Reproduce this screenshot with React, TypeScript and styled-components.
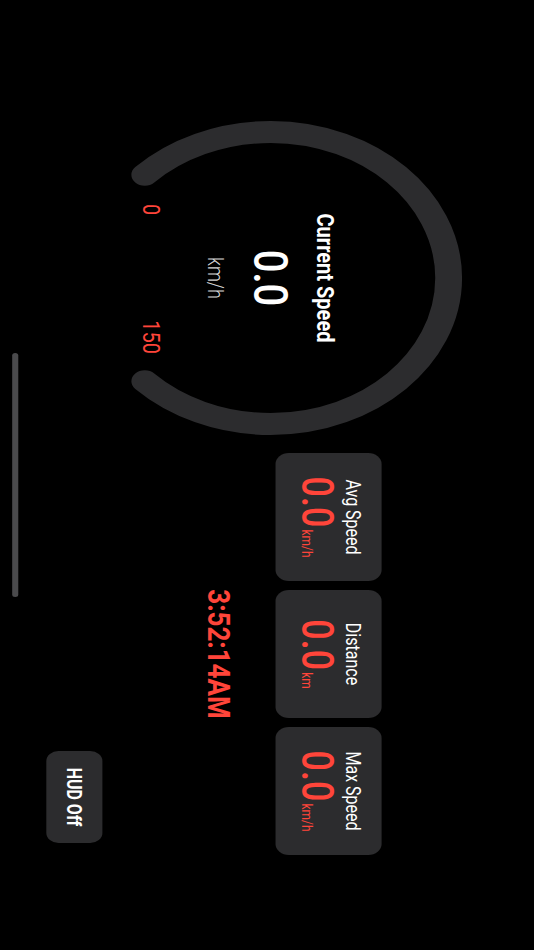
import React from "react";
import styled, { createGlobalStyle } from "styled-components";

const GlobalStyle = createGlobalStyle`
  html, body {
    margin: 0;
    padding: 0;
    background: #000;
    overflow: hidden;
  }
  * { box-sizing: border-box; }
`;

const RED = "#ff453a";
const PANEL = "#2c2c2e";
const FONT = `Roboto, "Liberation Sans", sans-serif`;

const Frame = styled.div`
  width: 534px;
  height: 950px;
  overflow: hidden;
  background: #000;
  font-family: ${FONT};
`;

/* The app is shown in landscape, rotated into the portrait frame */
const Landscape = styled.div`
  position: relative;
  width: 950px;
  height: 438px;
  transform-origin: 0 0;
  transform: translateX(534px) rotate(90deg) scaleY(1.2192);
  display: flex;
  align-items: flex-start;
  padding-left: 121px;
  background: #000;
`;

const Gauge = styled.div`
  position: relative;
  width: 314px;
  height: 314px;
  margin-top: 59px;
  flex-shrink: 0;
`;

const GaugeSvg = styled.svg`
  display: block;
  width: 314px;
  height: 314px;
`;

const GaugeOverlay = styled.div`
  position: absolute;
  inset: 0;
  display: flex;
  flex-direction: column;
  align-items: center;
  padding-top: 100px;
`;

const GaugeTitle = styled.div`
  font-size: 20px;
  line-height: 24px;
  font-weight: 700;
  color: #fff;
`;

const GaugeValue = styled.div`
  margin-top: 10px;
  font-size: 40px;
  line-height: 48px;
  font-weight: 500;
  color: #fff;
`;

const GaugeUnit = styled.div`
  margin-top: 9px;
  font-size: 18px;
  line-height: 22px;
  font-weight: 300;
  color: rgba(255, 255, 255, 0.85);
`;

const ScaleRow = styled.div`
  align-self: stretch;
  margin-top: 30px;
  display: flex;
  justify-content: space-between;
  padding: 0 81px 0 83px;
`;

const ScaleLabel = styled.span`
  font-size: 20px;
  line-height: 24px;
  font-weight: 400;
  color: ${RED};
`;

const Stats = styled.div`
  margin-left: 18px;
  margin-top: 125px;
  display: flex;
  flex-direction: column;
  align-items: center;
  width: 402px;
`;

const CardRow = styled.div`
  display: flex;
  gap: 9px;
`;

const Card = styled.div`
  width: 128px;
  height: 87px;
  background: ${PANEL};
  border-radius: 11px;
  display: flex;
  flex-direction: column;
  align-items: center;
  padding-top: 14px;
`;

const CardLabel = styled.div`
  font-size: 16px;
  line-height: 20px;
  color: #fff;
`;

const CardValueRow = styled.div`
  display: flex;
  align-items: baseline;
  margin-top: -1px;
`;

const CardValue = styled.span`
  font-size: 36px;
  line-height: 40px;
  font-weight: 500;
  color: ${RED};
`;

const CardUnit = styled.span`
  margin-left: 2px;
  font-size: 12px;
  line-height: 14px;
  color: ${RED};
`;

const Clock = styled.div`
  margin-top: 31px;
  font-size: 26px;
  line-height: 30px;
  font-weight: 700;
  color: ${RED};
`;

const ButtonRow = styled.div`
  align-self: stretch;
  display: flex;
  justify-content: flex-end;
  padding-right: 12px;
  margin-top: 81px;
`;

const HudButton = styled.button`
  width: 92px;
  height: 46px;
  border: none;
  border-radius: 10px;
  background: ${PANEL};
  color: #fff;
  font-family: ${FONT};
  font-size: 16px;
  font-weight: 700;
  padding: 0;
  cursor: pointer;
`;

const HomeIndicator = styled.div`
  position: absolute;
  left: 50%;
  bottom: 10px;
  width: 244px;
  height: 5px;
  margin-left: -122px;
  border-radius: 3px;
  background: #4a4a4c;
`;

const stats = [
  { label: "Avg Speed", value: "0.0", unit: "km/h" },
  { label: "Distance", value: "0.0", unit: "km" },
  { label: "Max Speed", value: "0.0", unit: "km/h" },
];

function SpeedGauge() {
  const c = 157;
  const r = 146;
  const d = r * Math.SQRT1_2;
  const path = `M ${c - d} ${c + d} A ${r} ${r} 0 1 1 ${c + d} ${c + d}`;
  return (
    <Gauge>
      <GaugeSvg viewBox="0 0 314 314">
        <path d={path} fill="none" stroke={PANEL} strokeWidth={22} strokeLinecap="round" />
      </GaugeSvg>
      <GaugeOverlay>
        <GaugeTitle>Current Speed</GaugeTitle>
        <GaugeValue>0.0</GaugeValue>
        <GaugeUnit>km/h</GaugeUnit>
        <ScaleRow>
          <ScaleLabel>0</ScaleLabel>
          <ScaleLabel>150</ScaleLabel>
        </ScaleRow>
      </GaugeOverlay>
    </Gauge>
  );
}

export default function App() {
  return (
    <>
      <GlobalStyle />
      <Frame>
        <Landscape>
          <SpeedGauge />
          <Stats>
            <CardRow>
              {stats.map((s) => (
                <Card key={s.label}>
                  <CardLabel>{s.label}</CardLabel>
                  <CardValueRow>
                    <CardValue>{s.value}</CardValue>
                    <CardUnit>{s.unit}</CardUnit>
                  </CardValueRow>
                </Card>
              ))}
            </CardRow>
            <Clock>3:52:14AM</Clock>
            <ButtonRow>
              <HudButton>HUD Off</HudButton>
            </ButtonRow>
          </Stats>
          <HomeIndicator />
        </Landscape>
      </Frame>
    </>
  );
}
